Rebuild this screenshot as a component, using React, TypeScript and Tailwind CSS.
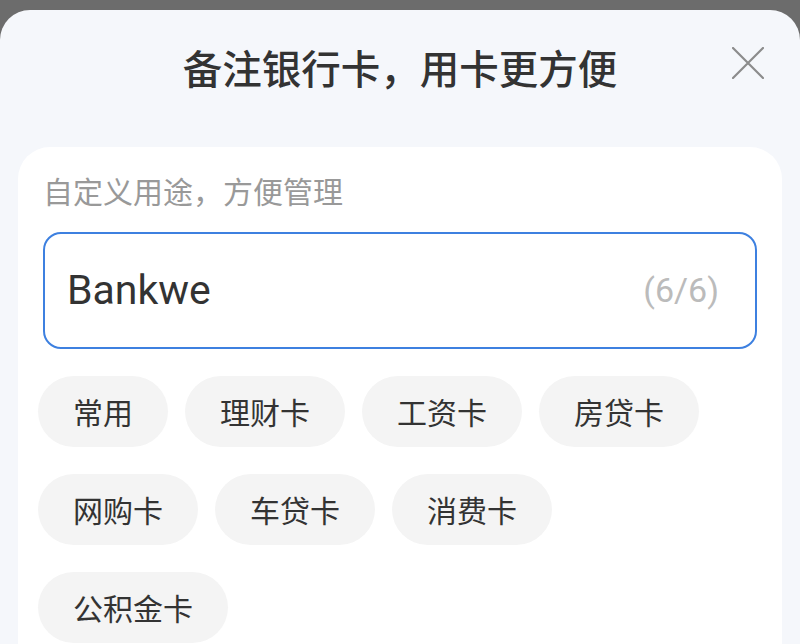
import React from "react";

const chips = ["常用", "理财卡", "工资卡", "房贷卡", "网购卡", "车贷卡", "消费卡", "公积金卡"];

export default function App() {
  return (
    <div
      className="w-[800px] h-[644px] overflow-hidden bg-[#6c6c6c] pt-[10px]"
      style={{ fontFamily: '"Noto Sans CJK SC", "Noto Sans", sans-serif' }}
    >
      <div className="h-full rounded-t-[30px] bg-[#f5f7fb] px-[18px]">
        <div className="relative flex justify-center pt-[36px]">
          <h1 className="text-[39.5px] leading-[41px] font-medium text-[#333333]">
            备注银行卡，用卡更方便
          </h1>
          <button className="absolute right-[18px] top-[37px] w-[32px] h-[32px] flex items-center justify-center">
            <svg width="32" height="32" viewBox="0 0 32 32" fill="none">
              <path d="M1 1L31 31M31 1L1 31" stroke="#8c8c8c" strokeWidth="2.2" strokeLinecap="round" />
            </svg>
          </button>
        </div>
        <div className="mt-[60px] rounded-[32px] bg-white pl-[20px] pr-[25px] pt-[28px] pb-[40px]">
          <div className="ml-[5px] text-[30px] leading-[30px] text-[#999999]">自定义用途，方便管理</div>
          <div className="ml-[5px] mt-[27px] h-[117px] rounded-[18px] border-2 border-[#3d80e0] flex items-center justify-between pl-[22px] pr-[36px]">
            <span
              className="text-[41px] text-[#333333]"
              style={{ fontFamily: 'Roboto, "Noto Sans", sans-serif' }}
            >
              Bankwe
            </span>
            <span
              className="text-[34px] text-[#bbbbbb]"
              style={{ fontFamily: 'Roboto, "Noto Sans", sans-serif' }}
            >
              (6/6)
            </span>
          </div>
          <div className="mt-[27px] flex flex-wrap gap-x-[17px] gap-y-[27px]">
            {chips.map((c) => (
              <div
                key={c}
                className="h-[71px] px-[35px] rounded-full bg-[#f4f4f4] flex items-center text-[30px] text-[#333333]"
              >
                {c}
              </div>
            ))}
          </div>
        </div>
      </div>
    </div>
  );
}
